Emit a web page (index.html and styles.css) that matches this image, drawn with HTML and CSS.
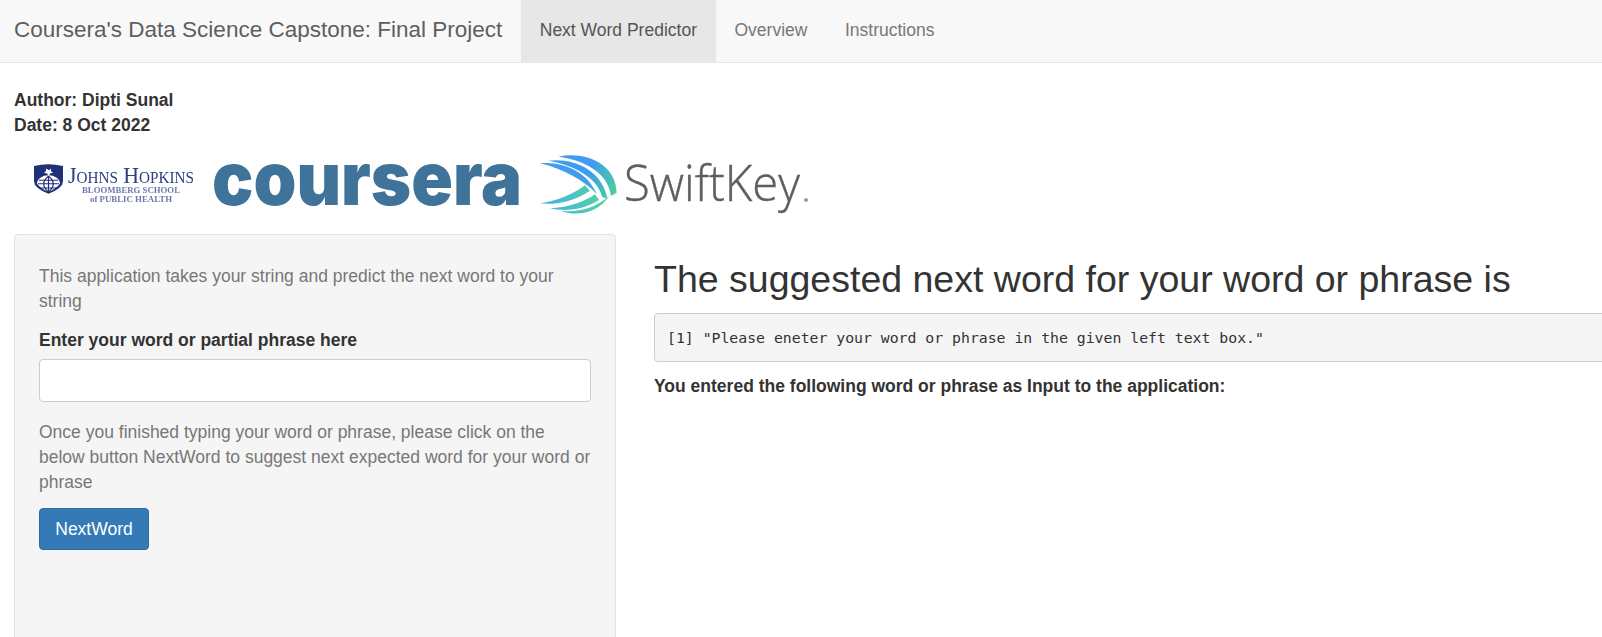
FILE: index.html
```html
<!DOCTYPE html>
<html lang="en">
<head>
<meta charset="utf-8">
<title>Coursera's Data Science Capstone: Final Project</title>
<link rel="stylesheet" href="styles.css">
</head>
<body>
<nav class="navbar">
  <span class="brand">Coursera's Data Science Capstone: Final Project</span>
  <ul class="tabs">
    <li class="tab active">Next Word Predictor</li>
    <li class="tab">Overview</li>
    <li class="tab">Instructions</li>
  </ul>
</nav>
<main class="page">
  <div class="meta">
    <div>Author: Dipti Sunal</div>
    <div>Date: 8 Oct 2022</div>
  </div>
  <div class="logos">
    <svg class="logo logo-jhu" width="176" height="70" viewBox="0 0 176 70">
      <g transform="translate(0 11) scale(1 .84)">
        <path d="M0 6 Q14 2 29 6 V24 Q29 32 14.500 39 Q0 32 0 24 Z" fill="#1f2f78"/>
        <path d="M12 9 l3 2 l2 -2 l0 3 l2 2 l-3 1 l-1 3 l-2 -3 l-3 -1 l2 -2 Z" fill="#fff"/>
        <path d="M3 27 A11.500 10 0 0 1 26 27 Q22 33 14.500 37 Q7 33 3 27 Z" fill="#fff"/>
        <path d="M4 27 H25 M6 32 H23 M14.500 18 V37 M14.500 18 Q5 27 14.500 37 M14.500 18 Q24 27 14.500 37 M5 23 H24" fill="none" stroke="#1f2f78" stroke-width="1.200"/>
      </g>
      <text class="jhu-name" x="34" y="33" textLength="126" lengthAdjust="spacingAndGlyphs">Johns Hopkins</text>
      <text class="jhu-sub" x="48" y="43" textLength="98" lengthAdjust="spacingAndGlyphs">BLOOMBERG SCHOOL</text>
      <text class="jhu-sub" x="56" y="52" textLength="82" lengthAdjust="spacingAndGlyphs">of PUBLIC HEALTH</text>
    </svg>
    <svg class="logo logo-coursera" width="306" height="70" viewBox="0 0 306 70">
      <text class="coursera-word" x="-2" y="55" textLength="310" lengthAdjust="spacingAndGlyphs">coursera</text>
    </svg>
    <svg class="logo logo-swift-mark" width="90" height="70" viewBox="0 0 270 210">
      <defs>
        <linearGradient id="swiftTop" gradientUnits="userSpaceOnUse" x1="30" y1="30" x2="255" y2="130">
          <stop offset="0" stop-color="#3f9cf0"/>
          <stop offset="0.600" stop-color="#3f9cf0"/>
          <stop offset="1" stop-color="#4ccf9c"/>
        </linearGradient>
        <linearGradient id="swiftLow" gradientUnits="userSpaceOnUse" x1="30" y1="170" x2="235" y2="130">
          <stop offset="0" stop-color="#48aee0"/>
          <stop offset="1" stop-color="#50d8a0"/>
        </linearGradient>
      </defs>
      <path d="M85 20 C160 3 258 38 260 128 L243 138 C235 70 165 30 85 20 Z" fill="url(#swiftTop)"/>
      <path d="M55 32 C130 22 218 60 232 146 L216 140 C205 88 140 47 55 32 Z" fill="url(#swiftTop)"/>
      <path d="M30 40 C100 32 175 68 200 132 C160 90 100 57 30 40 Z" fill="url(#swiftTop)"/>
      <path d="M30 160 C80 153 130 133 165 106 L180 122 C135 152 80 166 30 160 Z" fill="url(#swiftLow)"/>
      <path d="M60 175 C110 173 160 158 195 133 L207 150 C165 177 110 187 60 175 Z" fill="url(#swiftLow)"/>
      <path d="M90 182 C140 188 190 178 238 138 C205 187 145 202 90 182 Z" fill="url(#swiftLow)"/>
    </svg>
    <svg class="logo logo-swift-word" width="190" height="70" viewBox="0 0 190 70">
      <text class="swift-word" x="4" y="51" textLength="176" lengthAdjust="spacingAndGlyphs">SwiftKey</text>
      <circle cx="186" cy="50" r="2" fill="#9a9a9a"/>
    </svg>
  </div>
  <div class="columns">
    <aside class="well">
      <p class="muted">This application takes your string and predict the next word to your string</p>
      <label class="field-label" for="phrase">Enter your word or partial phrase here</label>
      <input class="field" id="phrase" type="text">
      <p class="muted">Once you finished typing your word or phrase, please click on the below button NextWord to suggest next expected word for your word or phrase</p>
      <button class="btn" type="button">NextWord</button>
    </aside>
    <section class="result">
      <h2 class="result-title">The suggested next word for your word or phrase is</h2>
      <pre class="output">[1] "Please eneter your word or phrase in the given left text box."</pre>
      <div class="entered">You entered the following word or phrase as Input to the application:</div>
    </section>
  </div>
</main>
</body>
</html>
```
FILE: styles.css
```css
* { box-sizing: border-box; }
html, body { margin: 0; height: 100%; overflow: hidden; }
body {
  background: #fff;
  color: #333;
  font-family: "Liberation Sans", Arial, sans-serif;
  font-size: 17.500px;
  line-height: 25px;
}
.navbar {
  display: flex;
  height: 63px;
  background: #f8f8f8;
  border-bottom: 1px solid #e7e7e7;
}
.brand {
  width: 521px;
  padding: 0 14px;
  font-size: 22.500px;
  line-height: 60px;
  color: #5e5e5e;
  white-space: nowrap;
}
.tabs { display: flex; margin: 0; padding: 0; list-style: none; }
.tab {
  padding: 0 18.750px;
  line-height: 60px;
  color: #777;
}
.active { background: #e7e7e7; color: #555; }
.page { padding: 0 14px; }
.meta { margin-top: 25px; font-weight: 700; }
.logos { display: flex; height: 96px; padding-top: 12px; filter: blur(0.4px); }
.logo { flex: none; overflow: visible; }
.logo-jhu { margin-left: 20px; }
.logo-coursera { margin-left: 4px; }
.logo-swift-mark { margin-left: 10px; }
.jhu-name { font-family: "Liberation Serif", serif; font-size: 23px; font-variant: small-caps; fill: #2f4080; }
.jhu-sub { font-family: "Liberation Serif", serif; font-size: 9px; fill: #6d7aa8; font-weight: 700; }
.coursera-word { font-family: Inter, "Liberation Sans", sans-serif; font-weight: 900; font-size: 74px; fill: #40739a; }
.swift-word { font-family: "Open Sans", "Liberation Sans", sans-serif; font-weight: 300; font-size: 49px; fill: #5e5e5e; stroke: #5e5e5e; stroke-width: 0.4px; }
.columns { display: flex; align-items: flex-start; gap: 38px; }
.well {
  flex: none;
  width: 602px;
  min-height: 500px;
  padding: 29px 24px 24px;
  background: #f5f5f5;
  border: 1px solid #e3e3e3;
  border-radius: 4px;
}
.muted { margin: 0 0 13.500px; color: #777; }
.field-label { display: block; margin-bottom: 6.250px; font-weight: 700; }
.field {
  display: block;
  width: 100%;
  height: 43px;
  margin-bottom: 18px;
  background: #fff;
  border: 1px solid #ccc;
  border-radius: 4px;
}
.btn {
  display: block;
  width: 110px;
  height: 42px;
  padding: 0;
  background: #337ab7;
  border: 1px solid #2e6da4;
  border-radius: 4px;
  color: #fff;
  font: 17.500px/1 "Liberation Sans", Arial, sans-serif;
}
.result { flex: none; width: 1000px; }
.result-title {
  margin: 25px 0 12.500px;
  font-size: 37.500px;
  font-weight: 400;
  line-height: 41.250px;
  white-space: nowrap;
}
.output {
  margin: 0 0 12.500px;
  padding: 12px 12px 11px;
  height: 49px;
  background: #f5f5f5;
  border: 1px solid #ccc;
  border-radius: 4px;
  font-family: "DejaVu Sans Mono", "Liberation Mono", monospace;
  font-size: 14.800px;
  line-height: 24px;
  color: #333;
}
.entered { font-weight: 700; }
```
